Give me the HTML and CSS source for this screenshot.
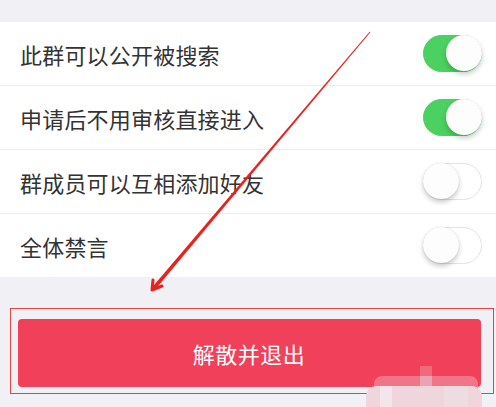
FILE: index.html
```html
<!DOCTYPE html>
<html lang="zh">
<head>
<meta charset="utf-8">
<link rel="stylesheet" href="styles.css">
</head>
<body>
<div class="page">
  <div class="top"></div>
  <div class="list">
    <div class="row"><span class="label">此群可以公开被搜索</span><span class="switch on"><span class="knob"></span></span></div>
    <div class="row"><span class="label">申请后不用审核直接进入</span><span class="switch on"><span class="knob"></span></span></div>
    <div class="row"><span class="label">群成员可以互相添加好友</span><span class="switch"><span class="knob"></span></span></div>
    <div class="row last"><span class="label">全体禁言</span><span class="switch"><span class="knob"></span></span></div>
  </div>
  <div class="footer">
    <div class="frame">
      <div class="btn">解散并退出</div>
    </div>
  </div>
  <svg class="arrow" width="496" height="407" viewBox="0 0 496 407">
    <polygon points="370.4,32.3 369.6,31.7 152.6,286.8 155.4,289.2" fill="#e8231f"/>
    <path d="M152 290 L153 280 M152 290 L162 286" stroke="#e8231f" stroke-width="3" fill="none" stroke-linecap="round"/>
  </svg>
  <div class="mosaic">
    <span class="m m1"></span><span class="m m2"></span><span class="m m3"></span><span class="m m4"></span><span class="m m5"></span>
    <span class="m m6"></span>
  </div>
</div>
</body>
</html>
```
FILE: styles.css
```css
html, body {
  margin: 0;
  padding: 0;
}
body {
  background: #f1f0f5;
  font-family: "Noto Sans CJK SC", "Noto Sans", sans-serif;
}
.page {
  position: relative;
  width: 496px;
  height: 407px;
  overflow: hidden;
  background: #f1f0f5;
}
.top {
  height: 22px;
}
.list {
  background: #ffffff;
}
.row {
  height: 63px;
  display: flex;
  align-items: center;
  justify-content: space-between;
  padding: 0 14px 0 20px;
  border-bottom: 1px solid #ececf0;
}
.row.last {
  border-bottom: none;
}
.label {
  font-size: 22px;
  color: #333333;
  letter-spacing: 0.2px;
  line-height: 1;
}
.switch {
  position: relative;
  width: 59px;
  height: 37px;
  border-radius: 19px;
  box-sizing: border-box;
  border: 1.5px solid #e3e3e6;
  background: #ffffff;
}
.switch.on {
  background: #4bd160;
  border-color: #4bd160;
}
.knob {
  position: absolute;
  top: -1px;
  left: -1px;
  width: 36px;
  height: 36px;
  border-radius: 50%;
  background: #fdfdfd;
  box-shadow: 0 3px 5px rgba(0, 0, 0, 0.22), 0 0 1px rgba(0, 0, 0, 0.15);
}
.switch.on .knob {
  left: auto;
  right: -1px;
  box-shadow: 0 3px 5px rgba(0, 0, 0, 0.22);
}
.footer {
  padding-top: 31px;
}
.frame {
  margin-left: 10px;
  width: 484px;
  height: 86px;
  box-sizing: border-box;
  border: 1.5px solid #e5453f;
  padding: 9.5px 12.5px 5.5px 6.5px;
}
.btn {
  height: 68px;
  background: #f0405a;
  border-radius: 4px;
  color: #ffffff;
  font-size: 22px;
  display: flex;
  align-items: center;
  justify-content: center;
  letter-spacing: 0.5px;
}
.arrow {
  position: absolute;
  left: 0;
  top: 0;
}
.mosaic {
  position: absolute;
  left: 366px;
  top: 366px;
  width: 116px;
  height: 41px;
}
.m {
  position: absolute;
}
.m1 { left: 8px; top: 10px; width: 104px; height: 20px; background: #ef7587; border-radius: 8px 8px 0 0; }
.m2 { left: 54px; top: 0; width: 12px; height: 20px; background: #ee6a7d; }
.m3 { left: 0; top: 20px; width: 116px; height: 21px; background: #efd6dc; border-radius: 10px 10px 0 0; }
.m4 { left: 54px; top: 10px; width: 12px; height: 10px; background: #eba3b2; }
.m5 { left: 14px; top: 20px; width: 12px; height: 21px; background: #f2e6ea; }
.m6 { left: 78px; top: 20px; width: 24px; height: 21px; background: #eddde1; }
```
